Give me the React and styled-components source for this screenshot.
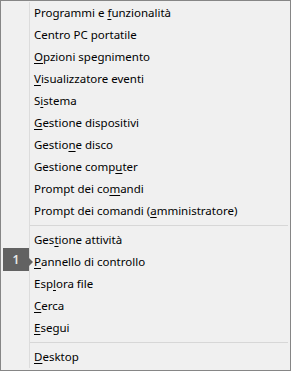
import React from 'react';
import styled, {createGlobalStyle} from 'styled-components';

const GlobalStyle = createGlobalStyle`
  html, body {
    margin: 0;
    padding: 0;
    background: #f0f0f0;
  }
`;

const StyledMenu = styled.ul`
  list-style: none;
  margin: 0;
  padding: 1px 0 2px;
  width: 291px;
  height: 371px;
  box-sizing: border-box;
  border: 1px solid #868686;
  background: #f0f0f0;
  font-family: "Noto Sans", "Open Sans", sans-serif;
  font-size: 11.5px;
  color: #000;
`;

const Row = styled.li`
  position: relative;
  display: grid;
  grid-template-columns: 29px 1fr;
  height: ${p => (p.$separator ? 7 : 22)}px;
`;

const Gutter = styled.span`
  border-right: 1px solid #dcdcdc;
`;

const Label = styled.span`
  display: block;
  line-height: 22px;
  padding-left: 4px;
  white-space: pre;

  u {
    text-decoration-thickness: 1px;
    text-underline-offset: 2px;
  }
`;

const Rule = styled.span`
  align-self: center;
  height: 1px;
  margin-right: 2px;
  background: #d7d7d7;
`;

const Badge = styled.span`
  position: absolute;
  left: 2px;
  top: -3px;
  width: 26px;
  height: 23px;
  background: #626262;
  color: #e8e8e8;
  font-size: 12px;
  font-weight: 600;
  display: flex;
  align-items: center;
  justify-content: center;

  &::after {
    content: '';
    position: absolute;
    right: -4px;
    top: 10px;
    border-left: 4px solid #626262;
    border-top: 4px solid transparent;
    border-bottom: 4px solid transparent;
  }
`;

// access key marked with _x_
const items = [
    'Programmi e _f_unzionalità',
    'Centro PC portatile',
    '_O_pzioni spegnimento',
    '_V_isualizzatore eventi',
    'S_i_stema',
    '_G_estione dispositivi',
    'Gestio_n_e disco',
    'Gestione comp_u_ter',
    'Prompt dei co_m_andi',
    'Prompt dei comandi (_a_mministratore)',
    '-',
    'Ges_t_ione attività',
    '_P_annello di controllo',
    'Esp_l_ora file',
    '_C_erca',
    '_E_segui',
    '-',
    '_D_esktop',
];

const renderLabel = text => {
    const parts = text.split('_');
    if (parts.length < 3) return text;
    return <>{parts[0]}<u>{parts[1]}</u>{parts[2]}</>;
};

const App = () => (
    <>
        <GlobalStyle/>
        <StyledMenu>
            {items.map((text, i) => text === '-' ? (
                <Row key={i} $separator>
                    <Gutter/>
                    <Rule/>
                </Row>
            ) : (
                <Row key={i}>
                    <Gutter/>
                    <Label>{renderLabel(text)}</Label>
                    {text.startsWith('_P_') && <Badge>1</Badge>}
                </Row>
            ))}
        </StyledMenu>
    </>
);

export default App;
